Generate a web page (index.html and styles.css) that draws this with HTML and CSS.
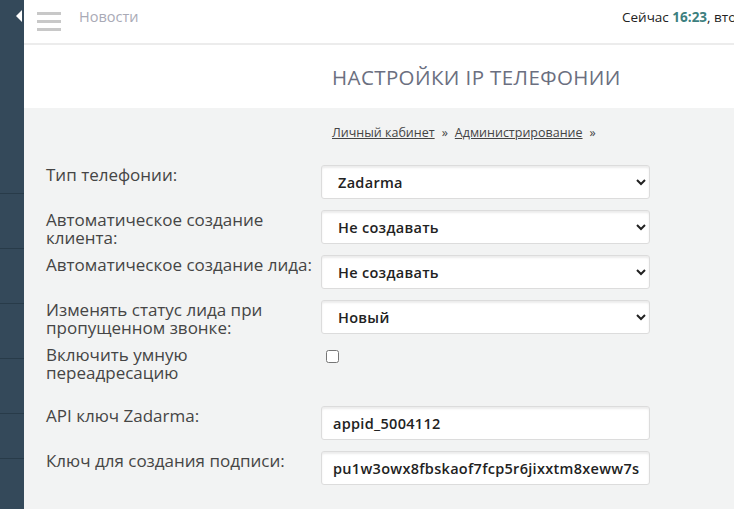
FILE: index.html
```html
<!DOCTYPE html>
<html lang="ru">
<head>
    <meta charset="UTF-8">
    <meta name="viewport" content="width=device-width, initial-scale=1.0">
    <title>Настройки IP телефонии</title>
    <link rel="stylesheet" href="styles.css">
</head>
<body>
    <div class="layout">
        <aside class="sidebar">
            <div class="sidebar-top">
                <span class="collapse-arrow"></span>
            </div>
            <div class="side-item"></div>
            <div class="side-item"></div>
            <div class="side-item"></div>
            <div class="side-item"></div>
            <div class="side-item short"></div>
            <div class="side-item"></div>
        </aside>

        <div class="main">
            <header class="topbar">
                <div class="topbar-left">
                    <span class="burger"><i></i><i></i><i></i></span>
                    <a class="news-link" href="#">Новости</a>
                </div>
                <div class="clock">Сейчас <b>16:23</b>, вторник, 12 марта</div>
            </header>

            <div class="title-bar">
                <h1>НАСТРОЙКИ IP ТЕЛЕФОНИИ</h1>
            </div>

            <div class="content">
                <div class="breadcrumbs">
                    <a href="#">Личный кабинет</a><span class="sep">&raquo;</span><a href="#">Администрирование</a><span class="sep">&raquo;</span>
                </div>

                <form class="settings">
                    <label class="field-label" for="type">Тип телефонии:</label>
                    <select id="type" class="control">
                        <option>Zadarma</option>
                    </select>

                    <label class="field-label" for="client">Автоматическое создание клиента:</label>
                    <select id="client" class="control">
                        <option>Не создавать</option>
                    </select>

                    <label class="field-label" for="lead">Автоматическое создание лида:</label>
                    <select id="lead" class="control">
                        <option>Не создавать</option>
                    </select>

                    <label class="field-label" for="status">Изменять статус лида при пропущенном звонке:</label>
                    <select id="status" class="control">
                        <option>Новый</option>
                    </select>

                    <label class="field-label check-row" for="redirect">Включить умную переадресацию</label>
                    <div class="check-cell">
                        <input type="checkbox" id="redirect">
                    </div>

                    <label class="field-label" for="api">API ключ Zadarma:</label>
                    <input type="text" id="api" class="control text" value="appid_5004112">

                    <label class="field-label" for="sign">Ключ для создания подписи:</label>
                    <input type="text" id="sign" class="control text" value="pu1w3owx8fbskaof7fcp5r6jixxtm8xeww7s">
                </form>
            </div>
        </div>
    </div>
</body>
</html>
```

FILE: styles.css
```css
body {
    margin: 0;
    font-family: "Open Sans", "Noto Sans", sans-serif;
    background-color: #f2f3f3;
    color: #444;
    overflow: hidden;
}
.layout {
    display: flex;
    min-height: 100vh;
}
.sidebar {
    width: 24px;
    flex: 0 0 24px;
    background-color: #34495a;
}
.sidebar-top {
    height: 193px;
    border-bottom: 1px solid #283b49;
    position: relative;
}
.collapse-arrow {
    position: absolute;
    left: 16px;
    top: 10px;
    width: 0;
    height: 0;
    border-top: 6px solid transparent;
    border-bottom: 6px solid transparent;
    border-right: 6px solid #fff;
}
.side-item {
    height: 54px;
    border-bottom: 1px solid #283b49;
}
.side-item.short {
    height: 44px;
}
.main {
    flex: 1;
    min-width: 0;
}
.topbar {
    height: 43px;
    background: white;
    border-bottom: 2px solid #ececec;
    display: flex;
    align-items: center;
    overflow: hidden;
    white-space: nowrap;
}
.topbar-left {
    flex: 0 0 598px;
    display: flex;
    align-items: center;
    padding-left: 13px;
    box-sizing: border-box;
}
.burger {
    display: flex;
    flex-direction: column;
    gap: 5px;
    width: 24px;
    margin-top: -1px;
}
.burger i {
    display: block;
    height: 3px;
    background-color: #c8c8c8;
}
.news-link {
    margin-left: 18px;
    color: #a9aab6;
    font-size: 14.5px;
    text-decoration: none;
    margin-top: -10px;
}
.clock {
    flex: none;
    font-size: 13.5px;
    color: #222;
    margin-top: -10px;
}
.clock b {
    color: #3d7f7f;
    font-weight: 700;
}
.title-bar {
    background: white;
    height: 63px;
    padding-left: 308px;
    display: flex;
    align-items: center;
}
h1 {
    margin: 0;
    font-size: 20.5px;
    font-weight: 400;
    color: #6b6f80;
    letter-spacing: 0.4px;
}
.content {
    padding: 16px 0 20px 22px;
}
.breadcrumbs {
    padding-left: 286px;
    font-size: 12.5px;
    color: #444;
    margin-bottom: 24px;
}
.breadcrumbs a {
    color: #444;
}
.breadcrumbs .sep {
    margin: 0 7px;
}
.settings {
    display: grid;
    grid-template-columns: 275px 329px;
    row-gap: 11px;
    align-items: start;
}
.field-label {
    font-size: 17px;
    line-height: 18px;
    color: #454545;
    padding: 1px 6px 0 0;
    margin-bottom: -3px;
}
.control {
    height: 34px;
    box-sizing: border-box;
    border: 1px solid #dcdcdc;
    border-radius: 3px;
    background-color: white;
    box-shadow: inset 0 2px 2px rgba(0, 0, 0, 0.08);
    font-family: "Open Sans", "Noto Sans", sans-serif;
    font-size: 14.5px;
    font-weight: 600;
    letter-spacing: 0.3px;
    color: #222;
    padding: 0 6px 0 12px;
    margin: 0;
}
.control.text {
    padding-left: 11px;
}
.check-row {
    margin-bottom: 13px;
}
.check-cell input {
    margin: 5px 0 0 5px;
}
```
